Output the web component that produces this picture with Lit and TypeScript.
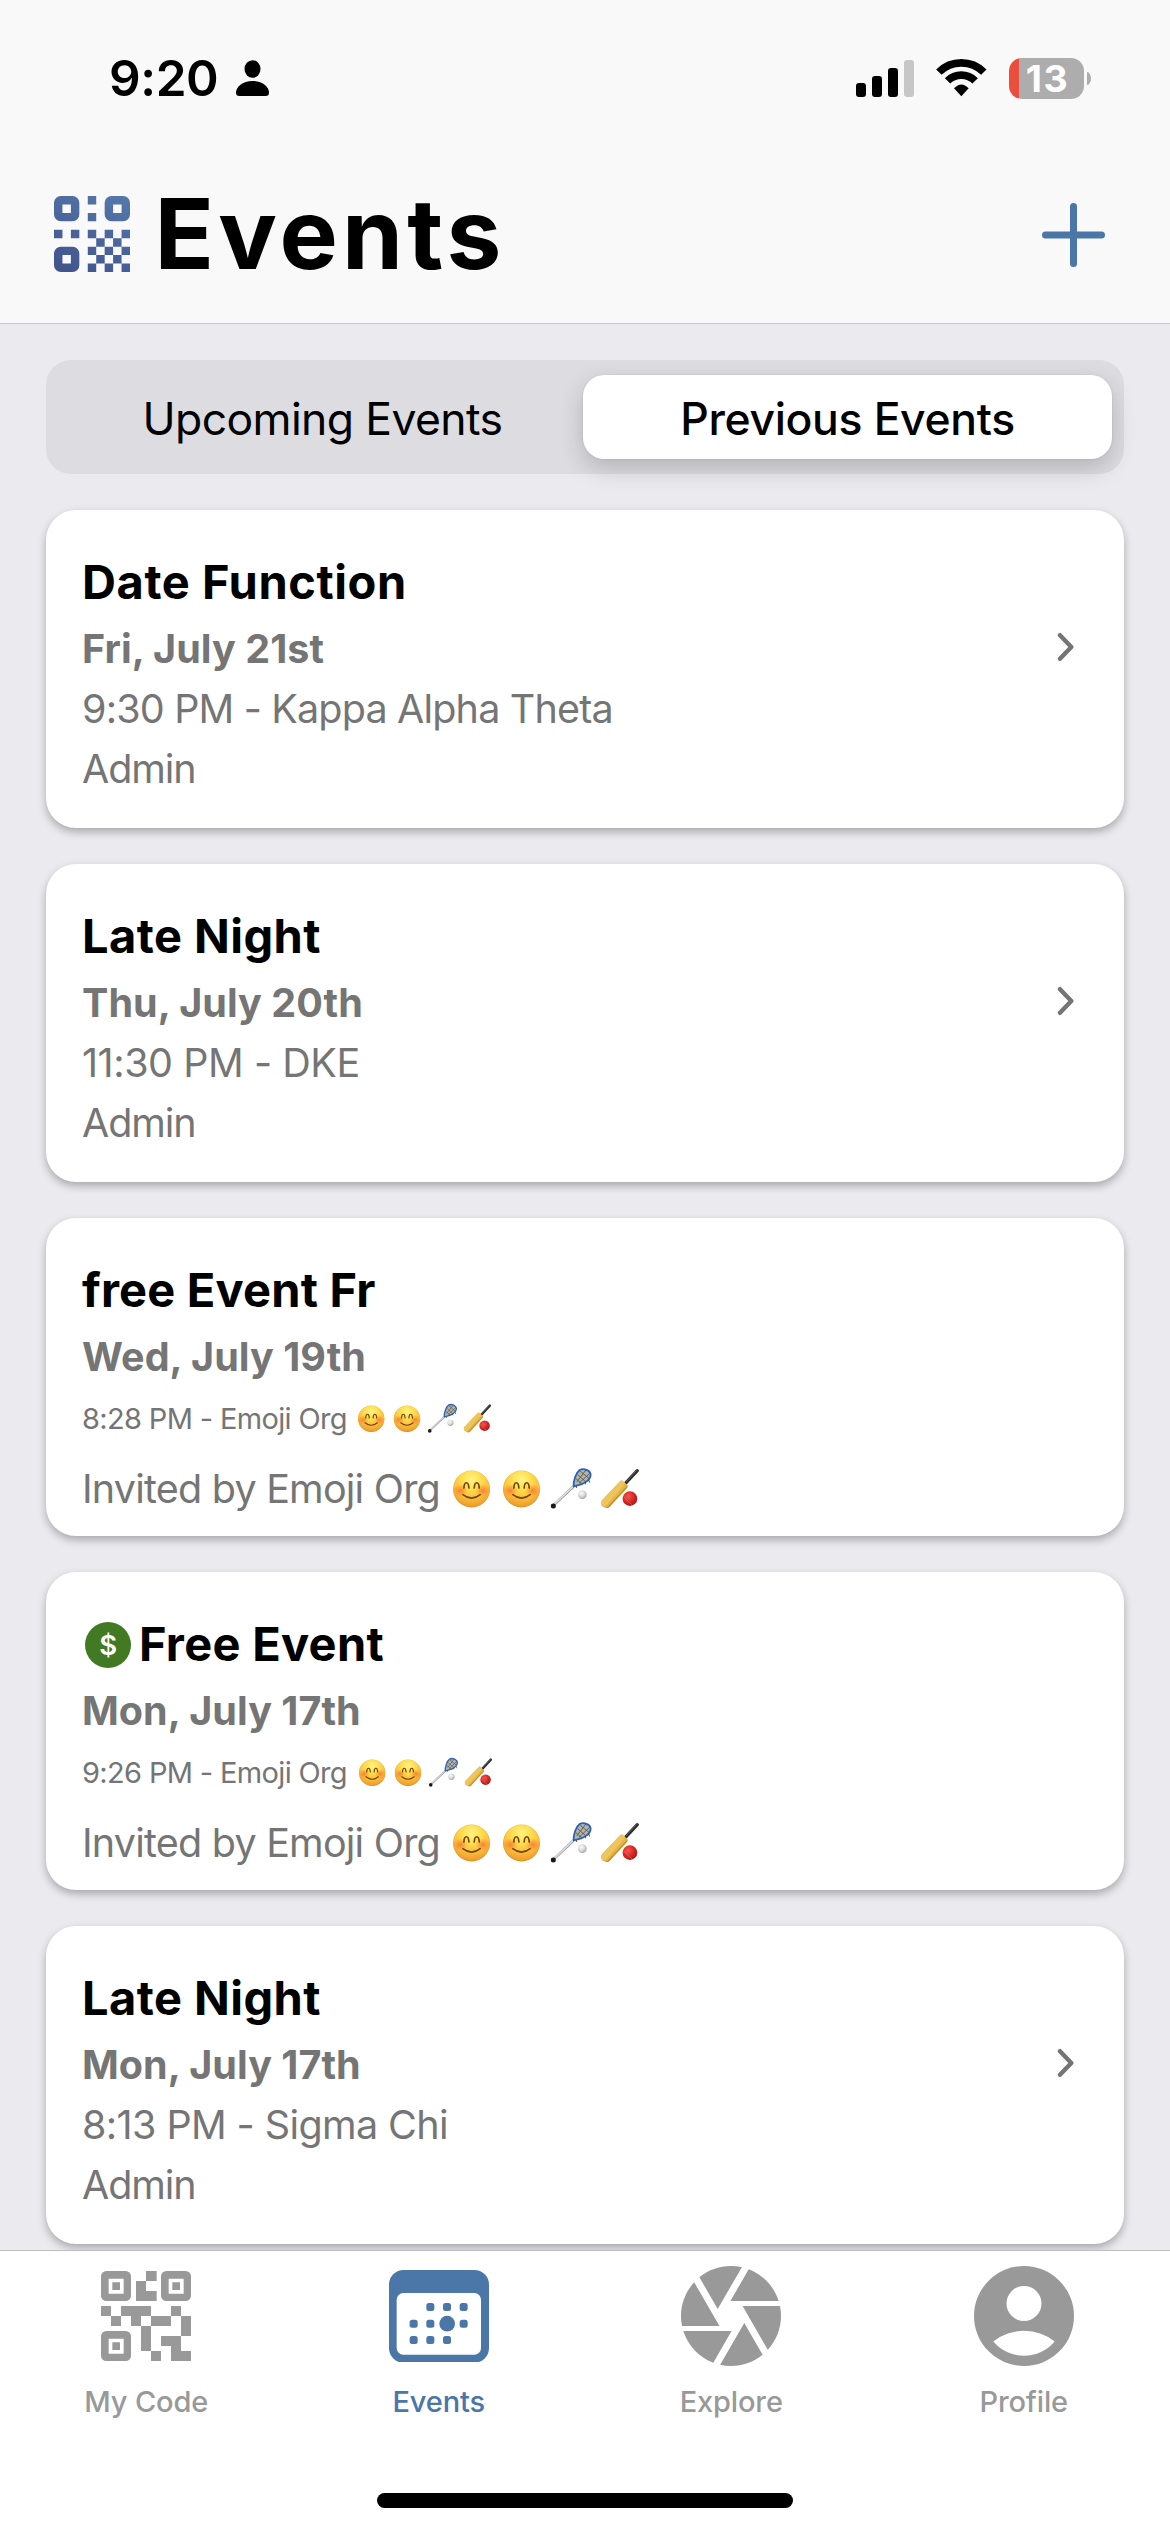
import { LitElement, html, svg, css, nothing } from 'lit';
import { customElement, property, state } from 'lit/decorators.js';
import { classMap } from 'lit/directives/class-map.js';
import { styleMap } from 'lit/directives/style-map.js';

interface EventItem {
  title: string;
  titleTracking: number;
  date: string;
  detail: string;
  detailTracking: number;
  role: string;
  roleTracking: number;
  free?: boolean;
  emoji?: boolean;
}

const EVENTS: EventItem[] = [
  { title: 'Date Function', titleTracking: 0.58, date: 'Fri, July 21st', detail: '9:30 PM - Kappa Alpha Theta', detailTracking: -0.83, role: 'Admin', roleTracking: -1.1 },
  { title: 'Late Night', titleTracking: 0.45, date: 'Thu, July 20th', detail: '11:30 PM - DKE', detailTracking: -0.45, role: 'Admin', roleTracking: -1.1 },
  { title: 'free Event Fr', titleTracking: 0.2, date: 'Wed, July 19th', detail: '8:28 PM - Emoji Org', detailTracking: -0.65, role: 'Invited by Emoji Org', roleTracking: -0.78, emoji: true },
  { title: 'Free Event', titleTracking: 0.29, date: 'Mon, July 17th', detail: '9:26 PM - Emoji Org', detailTracking: -0.65, role: 'Invited by Emoji Org', roleTracking: -0.78, emoji: true, free: true },
  { title: 'Late Night', titleTracking: 0.45, date: 'Mon, July 17th', detail: '8:13 PM - Sigma Chi', detailTracking: -0.6, role: 'Admin', roleTracking: -1.1 },
];

/* Two smiling faces, a lacrosse stick and a cricket bat, drawn as one strip. */
@customElement('emoji-strip')
export class EmojiStrip extends LitElement {
  static styles = css`
    :host { display: block; }
    svg { display: block; width: 100%; height: 100%; }
  `;

  private face(x: number) {
    return svg`<g transform="translate(${x} 101)">
      <circle r="55.5" fill="url(#rim)"></circle>
      <circle r="54" fill="url(#skin)"></circle>
      <ellipse cx="-34" cy="5" rx="22" ry="19" fill="url(#blush)"></ellipse>
      <ellipse cx="34" cy="5" rx="22" ry="19" fill="url(#blush)"></ellipse>
      <path d="M-23 -3C-22 -24 -9 -24 -8 -3M8 -3C9 -24 22 -24 23 -3" fill="none" stroke="#70430f" stroke-width="5" stroke-linecap="round"></path>
      <path d="M-26 17Q0 38 26 17" fill="none" stroke="#70430f" stroke-width="4.6" stroke-linecap="round"></path>
    </g>`;
  }

  render() {
    return html`<svg viewBox="15 35 570 130">
      <defs>
        <linearGradient id="rim" x1="0" y1="0" x2="0" y2="1">
          <stop offset="0" stop-color="#f0bd45"></stop><stop offset="1" stop-color="#d9831c"></stop>
        </linearGradient>
        <radialGradient id="skin" cx=".5" cy=".24" r=".76">
          <stop offset="0" stop-color="#fff482"></stop><stop offset=".35" stop-color="#fede50"></stop>
          <stop offset=".7" stop-color="#fbbb3a"></stop><stop offset="1" stop-color="#ec9a2a"></stop>
        </radialGradient>
        <radialGradient id="blush">
          <stop offset="0" stop-color="#f47a30" stop-opacity=".85"></stop><stop offset="1" stop-color="#f47a30" stop-opacity="0"></stop>
        </radialGradient>
        <radialGradient id="white" cx=".4" cy=".35" r=".65">
          <stop offset="0" stop-color="#fbfbfb"></stop><stop offset=".6" stop-color="#d6d6d6"></stop><stop offset="1" stop-color="#a4a4a4"></stop>
        </radialGradient>
        <radialGradient id="red" cx=".38" cy=".35" r=".68">
          <stop offset="0" stop-color="#f4574d"></stop><stop offset=".6" stop-color="#d32723"></stop><stop offset="1" stop-color="#a81715"></stop>
        </radialGradient>
      </defs>
      ${this.face(76.5)}${this.face(226.5)}
      <path d="M324 149L384 92" stroke="#8b8b90" stroke-width="7.5"></path>
      <path d="M324 148L384 91" stroke="#dfdfe3" stroke-width="4.5"></path>
      <circle cx="322" cy="152" r="7.5" fill="#18181b"></circle>
      <path d="M383 93C382 76 390 52 401 44C413 37 433 45 434 58C434 74 413 87 395 90Z" fill="#b4b3a8" stroke="#2a63b6" stroke-width="5.5" stroke-linejoin="round"></path>
      <path d="M392 80L420 44M399 84L431 54M390 70L408 86M395 58L419 79M403 48L429 69" stroke="#4c4b45" stroke-width="2.3"></path>
      <path d="M418 80L419 87M428 72L431 82M391 92L392 98" stroke="#3d3d3d" stroke-width="2.5"></path>
      <circle cx="409" cy="118" r="13" fill="url(#white)"></circle>
      <path d="M537 86L574 46" stroke="#2d2d30" stroke-width="10" stroke-linecap="round"></path>
      <path d="M541 79L571 46" stroke="#707074" stroke-width="2.5" stroke-linecap="round"></path>
      <path d="M523 77Q528 73 532 78L544 89Q547 93 543 98L491 154Q486 160 478 157Q466 154 465 145Q464 139 468 135Z" fill="#e5b548"></path>
      <path d="M523 77Q528 73 532 78L538 84L479 152Q466 154 465 145Q464 139 468 135Z" fill="#eec55c"></path>
      <path d="M544 89Q547 93 543 98L491 154Q486 160 478 157L484 155L541 94Z" fill="#c58f2c"></path>
      <circle cx="552" cy="130" r="22" fill="url(#red)"></circle>
      <path d="M534 124Q543 137 558 148" fill="none" stroke="#f0837a" stroke-width="2" opacity=".7"></path>
    </svg>`;
  }
}

@customElement('event-card')
export class EventCard extends LitElement {
  @property({ attribute: false }) item!: EventItem;

  static styles = css`
    :host { display: block; }
    .card {
      box-sizing: border-box; height: 318px; padding: 42px 50px 0 36px; display: flex; justify-content: space-between;
      border-radius: 30px; background: #fff; box-shadow: 0 4px 9px rgba(0, 0, 0, 0.28);
    }
    .row { display: flex; align-items: center; height: 60px; font-size: 39.5px; line-height: 60px; color: #757575; white-space: pre; }
    .title { font-size: 47px; font-weight: 700; color: #000; margin-bottom: 7px; }
    .date { font-weight: 700; letter-spacing: 0.05px; }
    .small { font-size: 29px; height: 63px; line-height: 63px; margin-bottom: 9px; }
    .strip { width: 190px; height: 43.3px; margin-left: 11px; }
    .small .strip { width: 137px; height: 31px; margin-left: 9.5px; }
    .badge {
      width: 46.6px; height: 46.6px; border-radius: 50%; margin: 2px 7.5px 0 2.8px; background: #417a23; color: #fff;
      display: flex; align-items: center; justify-content: center; font-size: 27.5px; line-height: 46px; font-weight: 600;
    }
    .chevron { width: 18px; height: 30px; margin-top: 80px; margin-right: -1px; flex: none; }
  `;

  render() {
    const e = this.item;
    const track = (px: number) => styleMap({ letterSpacing: `${px}px` });
    const strip = e.emoji ? html`<emoji-strip class="strip"></emoji-strip>` : nothing;
    return html`<div class="card">
      <div>
        <div class="row title">${e.free ? html`<span class="badge">$</span>` : nothing}<span style=${track(e.titleTracking)}>${e.title}</span></div>
        <div class="row date">${e.date}</div>
        <div class=${classMap({ row: true, small: !!e.emoji })}><span style=${track(e.detailTracking)}>${e.detail}</span>${strip}</div>
        <div class="row"><span style=${track(e.roleTracking)}>${e.role}</span>${strip}</div>
      </div>
      ${e.emoji ? nothing : html`<svg class="chevron" viewBox="0 0 18 30">
        <path d="M3 3.2L14.3 15L3 26.8" fill="none" stroke="#757575" stroke-width="4.4" stroke-linecap="round" stroke-linejoin="round"></path>
      </svg>`}
    </div>`;
  }
}

const qrModules = [
  [4, 0], [4, 2], [0, 4], [2, 4],
  [4, 4], [6, 4], [8, 4], [5, 5], [7, 5], [4, 6], [6, 6], [8, 6], [5, 7], [7, 7], [4, 8], [6, 8], [8, 8],
];

const logo = html`<svg class="logo" viewBox="0 0 90 90">
  <defs><linearGradient id="lg" gradientUnits="userSpaceOnUse" x1="70" y1="0" x2="30" y2="90">
    <stop offset="0" stop-color="#5277a8"></stop><stop offset="1" stop-color="#43558f"></stop>
  </linearGradient></defs>
  <g fill="url(#lg)">
    ${[[0, 0], [60, 0], [0, 60]].map(([x, y]) => svg`<path fill-rule="evenodd" d="M${x + 8} ${y}h14a8 8 0 0 1 8 8v14a8 8 0 0 1 -8 8h-14a8 8 0 0 1 -8 -8v-14a8 8 0 0 1 8 -8zM${x + 10} ${y + 10}v10h10v-10z"></path>`)}
    <path d="${qrModules.map(([x, y]) => `M${x * 10} ${y * 10}h10v10h-10z`).join('')}"></path>
  </g>
</svg>`;

const codeIcon = html`<svg width="90" height="90" viewBox="123 123 270 270" fill="currentColor">
  ${[[123, 123], [303, 123], [123, 303]].map(([x, y]) => svg`<path fill-rule="evenodd" d="M${x + 16} ${y}h58a16 16 0 0 1 16 16v58a16 16 0 0 1 -16 16h-58a16 16 0 0 1 -16 -16v-58a16 16 0 0 1 16 -16zM${x + 23} ${y + 23}v45h45v-45zM${x + 34} ${y + 34}h23v23h-23z"></path>`)}
  <path d="M258 123h32v30h-32zM228 153h30v30h32v30h-62zM123 228h30v30h-30zM183 228h90v30h-30v30h-30v-30h-30zM333 228h30v30h-30zM153 258h30v30h-30zM273 258h60v30h-60zM363 258h30v60h-30zM243 288h30v75h-30zM303 318h60v45h30v30h-60v-45h-30zM273 363h30v30h-30z"></path>
</svg>`;

const calendarDots = [[208, 234], [258, 234], [308, 234], [158, 284], [208, 284], [308, 284], [158, 333], [208, 333], [258, 333]];

const calendarIcon = html`<svg width="100" height="92.7" viewBox="84 123 300 278">
  <rect x="84" y="123" width="300" height="278" rx="44" fill="currentColor"></rect>
  <rect x="107" y="192" width="253" height="185" rx="20" fill="#fff"></rect>
  <circle cx="258.500" cy="284" r="23.500" fill="currentColor"></circle>
  ${calendarDots.map(([x, y]) => svg`<rect x=${x - 12} y=${y - 12} width="24" height="24" rx="7.5" fill="currentColor"></rect>`)}
</svg>`;

const apertureIcon = html`<svg width="100" height="100" viewBox="2 2 20 20" fill="currentColor">
  <path d="M9.4 10.5l4.77-8.26C13.47 2.09 12.75 2 12 2c-2.4 0-4.6.85-6.32 2.25l3.66 6.35.06-.1zM21.54 9c-.92-2.92-3.15-5.26-6-6.34L11.88 9h9.66zm.26 1h-7.49l.29.5 4.76 8.25C21 16.97 22 14.61 22 12c0-.69-.07-1.35-.2-2zM8.54 12l-3.9-6.75C3.01 7.03 2 9.39 2 12c0 .69.07 1.35.2 2h7.49l-1.15-2zm-6.08 3c.92 2.92 3.15 5.26 6 6.34L12.12 15H2.46zm11.27 0l-3.9 6.76c.7.15 1.42.24 2.17.24 2.4 0 4.6-.85 6.32-2.25l-3.66-6.35-.93 1.6z"></path>
</svg>`;

const profileIcon = html`<svg width="100" height="100" viewBox="2 2 20 20">
  <circle cx="12" cy="12" r="10" fill="currentColor"></circle>
  <circle cx="12" cy="9.500" r="3.500" fill="#fff"></circle>
  <path d="M5.870 17.100A9.900 9.900 0 0 1 18.130 17.100A8 8 0 0 1 5.870 17.100Z" fill="#fff"></path>
</svg>`;

const TABS = [
  { label: 'My Code', icon: codeIcon },
  { label: 'Events', icon: calendarIcon },
  { label: 'Explore', icon: apertureIcon },
  { label: 'Profile', icon: profileIcon },
];

@customElement('app-root')
export class AppRoot extends LitElement {
  @state() private activeTab = 'Events';
  @state() private segment = 'Previous Events';

  static styles = css`
    :host {
      display: flex; flex-direction: column; width: 1170px; height: 2532px; overflow: hidden;
      background: #eaeaef; font-family: Inter, "Liberation Sans", sans-serif; color: #000;
    }
    svg { display: block; flex: none; }
    .header { box-sizing: border-box; height: 324px; flex: none; background: #f9f9f9; border-bottom: 1px solid #c9c9cc; }
    .status { box-sizing: border-box; height: 156px; padding: 0 79px 0 109px; display: flex; align-items: center; }
    .time { font-size: 49.5px; line-height: 60px; font-weight: 600; letter-spacing: -0.4px; }
    .person { width: 33px; height: 36px; margin-left: 17.5px; margin-right: auto; }
    .signal { width: 58px; height: 37px; }
    .wifi { width: 50.7px; height: 37.3px; margin: 0 22px; }
    .battery {
      box-sizing: border-box; width: 75px; height: 41px; border-radius: 13px; display: flex; align-items: center; justify-content: center;
      background: linear-gradient(90deg, #eb4e3d 10px, #adadad 10px); color: #fff; font-size: 37.5px; line-height: 41px; font-weight: 700;
      letter-spacing: 1.5px; padding-left: 2px;
    }
    .nub { width: 4px; height: 13px; margin-left: 3px; background: #adadad; border-radius: 0 4px 4px 0 / 0 6.5px 6.5px 0; }
    .bar { box-sizing: border-box; height: 156px; padding: 0 65px 0 54px; display: flex; align-items: center; }
    .logo { width: 76px; height: 76px; }
    .heading { margin: 0 auto 0 24.5px; font-size: 98px; line-height: 120px; font-weight: 700; letter-spacing: 4.2px; }
    .plus { width: 63px; height: 64px; margin-top: 2px; }
    .content { flex: 1; min-height: 0; overflow: hidden; padding: 36px 46px 0; display: flex; flex-direction: column; gap: 36px; }
    .segments {
      box-sizing: border-box; flex: none; height: 114px; padding: 15px 12px; display: grid; grid-template-columns: 1fr 1fr;
      border-radius: 25px; background: #dddce1;
    }
    .segment {
      display: flex; align-items: center; justify-content: center; padding: 3px 0 0 2px; border-radius: 21px;
      font-size: 44.5px; line-height: 54px; letter-spacing: -0.62px; white-space: nowrap;
    }
    .segment.on {
      margin-left: -2px; padding-left: 0; background: #fff; font-weight: 500; letter-spacing: -0.34px;
      box-shadow: 0 9px 24px rgba(0, 0, 0, 0.19), 0 0 2px rgba(0, 0, 0, 0.12);
    }
    .card { flex: none; }
    .tabs { box-sizing: border-box; flex: none; height: 282px; border-top: 1px solid #bdbdc0; background: #fff; display: flex; flex-direction: column; }
    .tab-row { display: grid; grid-template-columns: repeat(4, 1fr); padding-top: 15px; }
    .tab { display: flex; flex-direction: column; align-items: center; color: #999; }
    .tab.on { color: #4a76a8; }
    .icon { height: 100px; display: flex; align-items: center; justify-content: center; }
    .label { margin-top: 17px; font-size: 29px; line-height: 37px; font-weight: 500; letter-spacing: -0.15px; }
    .home { width: 416px; height: 15px; border-radius: 8px; margin: auto auto 24px; background: #000; }
  `;

  render() {
    return html`
      <div class="header">
        <div class="status">
          <span class="time">9:20</span>
          <svg class="person" viewBox="0 0 33 36"><ellipse cx="16.500" cy="9" rx="8" ry="8.800"></ellipse><path d="M3.500 36C1 36 0 35 0 32.500C0 27 6.500 21 16.500 21S33 27 33 32.500C33 35 32 36 29.500 36Z"></path></svg>
          <svg class="signal" viewBox="0 0 58 37">
            <rect y="23" width="10" height="14" rx="3"></rect><rect x="16" y="16" width="10" height="21" rx="3"></rect>
            <rect x="32" y="8" width="10" height="29" rx="3"></rect><rect x="48" width="10" height="37" rx="3" fill="#c7c7c7"></rect>
          </svg>
          <svg class="wifi" viewBox="0 0 152 112">
            <path d="M8.500 39.500A95.500 95.500 0 0 1 143.500 39.500M34.600 65.600A58.500 58.500 0 0 1 117.400 65.600" fill="none" stroke="#000" stroke-width="23"></path>
            <path d="M76 112L54 88Q76 65 98 88Z"></path>
          </svg>
          <span class="battery">13</span><span class="nub"></span>
        </div>
        <div class="bar">
          ${logo}
          <div class="heading">Events</div>
          <svg class="plus" viewBox="0 0 63 64"><path d="M31.500 3.500V60.500M3.500 32H59.500" stroke="#4a76a8" stroke-width="7" stroke-linecap="round"></path></svg>
        </div>
      </div>
      <div class="content">
        <div class="segments">
          ${['Upcoming Events', 'Previous Events'].map(
            (s) => html`<div class=${classMap({ segment: true, on: s === this.segment })} @click=${() => (this.segment = s)}>${s}</div>`,
          )}
        </div>
        ${EVENTS.map((e) => html`<event-card class="card" .item=${e}></event-card>`)}
      </div>
      <div class="tabs">
        <div class="tab-row">
          ${TABS.map(
            (t) => html`<div class=${classMap({ tab: true, on: t.label === this.activeTab })} @click=${() => (this.activeTab = t.label)}>
              <div class="icon">${t.icon}</div>
              <div class="label">${t.label}</div>
            </div>`,
          )}
        </div>
        <div class="home"></div>
      </div>
    `;
  }
}
